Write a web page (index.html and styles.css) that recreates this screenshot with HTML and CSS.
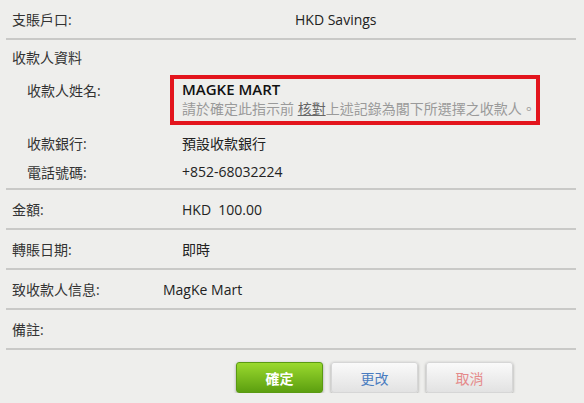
FILE: index.html
```html
<!DOCTYPE html>
<html lang="zh-Hant">
<head>
    <meta charset="UTF-8">
    <meta name="viewport" content="width=device-width, initial-scale=1.0">
    <title>轉賬確認</title>
    <link rel="stylesheet" href="styles.css">
</head>
<body>
    <div class="confirm">
        <div class="row">
            <span class="label">支賬戶口:</span>
            <span class="value wide">HKD Savings</span>
        </div>

        <div class="section">
            <div class="section-title">收款人資料</div>
            <div class="sub-row name-row">
                <span class="label">收款人姓名:</span>
                <div class="payee-box">
                    <div class="payee-name">MAGKE MART</div>
                    <div class="payee-note">請於確定此指示前 <u>核對</u>上述記錄為閣下所選擇之收款人。</div>
                </div>
            </div>
            <div class="sub-row">
                <span class="label">收款銀行:</span>
                <span class="value">預設收款銀行</span>
            </div>
            <div class="sub-row">
                <span class="label">電話號碼:</span>
                <span class="value">+852-68032224</span>
            </div>
        </div>

        <div class="row">
            <span class="label">金額:</span>
            <span class="value">HKD&nbsp; 100.00</span>
        </div>
        <div class="row">
            <span class="label">轉賬日期:</span>
            <span class="value">即時</span>
        </div>
        <div class="row">
            <span class="label">致收款人信息:</span>
            <span class="value narrow">MagKe Mart</span>
        </div>
        <div class="row">
            <span class="label">備註:</span>
            <span class="value"></span>
        </div>

        <div class="actions">
            <button class="btn btn-ok">確定</button>
            <button class="btn btn-edit">更改</button>
            <button class="btn btn-cancel">取消</button>
        </div>
    </div>
</body>
</html>
```

FILE: styles.css
```css
body {
    margin: 0;
    background: #eeeeec;
    font-family: "Open Sans", "Noto Sans CJK TC", sans-serif;
    font-size: 14px;
    color: #333;
}
.confirm {
    margin: 0 8px 0 6px;
}
.row {
    display: flex;
    align-items: center;
    height: 38px;
    padding-left: 6px;
    border-bottom: 2px solid #c9c9c7;
}
.row .label {
    width: 170px;
    flex-shrink: 0;
}
.value {
    color: #222;
}
.value.wide {
    margin-left: 113px;
}
.value.narrow {
    margin-left: -19px;
}
.section {
    height: 148px;
    border-bottom: 2px solid #c9c9c7;
}
.section-title {
    height: 35px;
    line-height: 36px;
    padding-left: 6px;
}
.sub-row {
    display: flex;
    align-items: center;
    height: 29px;
    padding-left: 21px;
}
.sub-row .label {
    width: 155px;
    flex-shrink: 0;
}
.name-row {
    height: auto;
    align-items: flex-start;
    margin-bottom: 3px;
}
.name-row .label {
    padding-top: 5px;
}
.payee-box {
    width: 346px;
    margin-left: -12px;
    border: 4px solid #e3151d;
    padding: 0 8px 3px 8px;
}
.payee-name {
    font-size: 15px;
    font-weight: 600;
    color: #111;
    line-height: 20px;
}
.payee-note {
    font-size: 14px;
    color: #9a9a9a;
    line-height: 19px;
    white-space: nowrap;
}
.payee-note u {
    color: #666;
}
.actions {
    display: flex;
    gap: 8px;
    padding: 12px 0 0 230px;
}
.btn {
    width: 87px;
    height: 31px;
    border-radius: 3px;
    font-family: inherit;
    font-size: 14px;
    cursor: pointer;
    box-shadow: 0 1px 3px rgba(0,0,0,0.35);
}
.btn-ok {
    background: linear-gradient(#9ad92e, #5c9f10);
    border: 1px solid #5a9a12;
    color: #fff;
    font-weight: bold;
}
.btn-edit, .btn-cancel {
    background: linear-gradient(#fafafa, #e2e2e2);
    border: 1px solid #d6d6d6;
}
.btn-edit {
    color: #4a7cc0;
}
.btn-cancel {
    color: #e58a8a;
}
```
